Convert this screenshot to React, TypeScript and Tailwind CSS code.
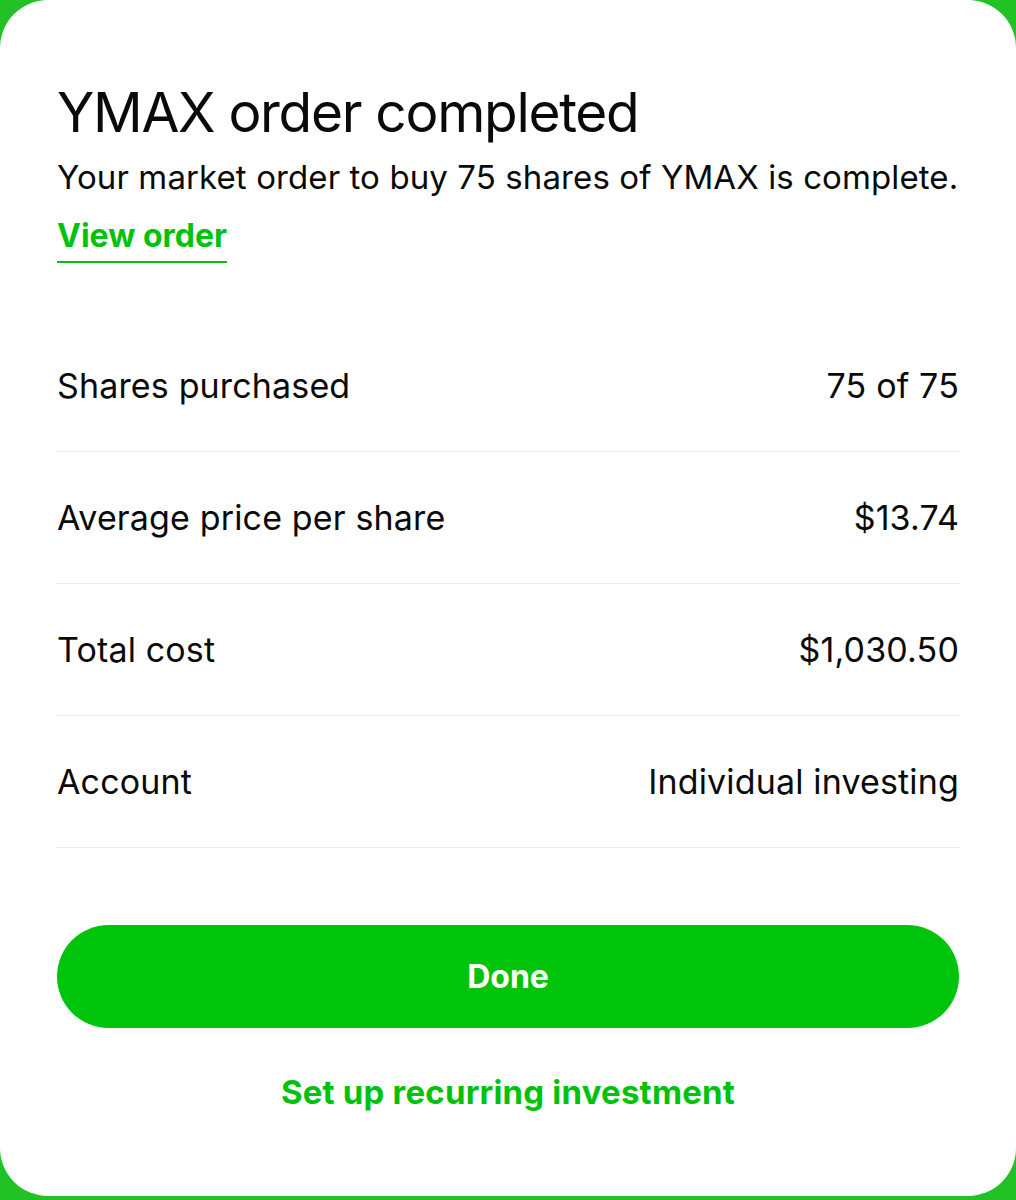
import React from "react";

const rows: [string, string][] = [
  ["Shares purchased", "75 of 75"],
  ["Average price per share", "$13.74"],
  ["Total cost", "$1,030.50"],
  ["Account", "Individual investing"],
];

export default function App() {
  return (
    <div
      className="w-[1016px] h-[1200px] bg-[#22c126] pb-[4px]"
      style={{ fontFamily: "Inter, 'Noto Sans', sans-serif" }}
    >
      <div className="h-full bg-white rounded-[48px] px-[57px] pt-[78px] flex flex-col text-[#0a0a0a]">
        <h1 className="text-[55px] leading-[68px] font-normal tracking-[-1.3px] whitespace-nowrap">YMAX order completed</h1>
        <p className="text-[33px] leading-[44px] mt-[9px] tracking-[0.1px] whitespace-nowrap">
          Your market order to buy 75 shares of YMAX is complete.
        </p>
        <div className="mt-[18px]">
          <span className="inline-block text-[32px] leading-[38px] font-bold text-[#00c20b] border-b-2 border-[#00c20b] pb-[6px]">
            View order
          </span>
        </div>
        <div className="mt-[57px] flex flex-col">
          {rows.map(([k, v]) => (
            <div
              key={k}
              className="h-[132px] flex items-center justify-between border-b border-[#ebebeb] text-[34px] tracking-[0.15px] whitespace-nowrap"
            >
              <span>{k}</span>
              <span>{v}</span>
            </div>
          ))}
        </div>
        <button className="mt-[77px] h-[103px] w-full rounded-full bg-[#00c40b] text-white text-[32px] font-bold">
          Done
        </button>
        <div className="mt-[40px] text-center text-[33px] tracking-[0.2px] font-bold text-[#00c20b] whitespace-nowrap">
          Set up recurring investment
        </div>
      </div>
    </div>
  );
}
